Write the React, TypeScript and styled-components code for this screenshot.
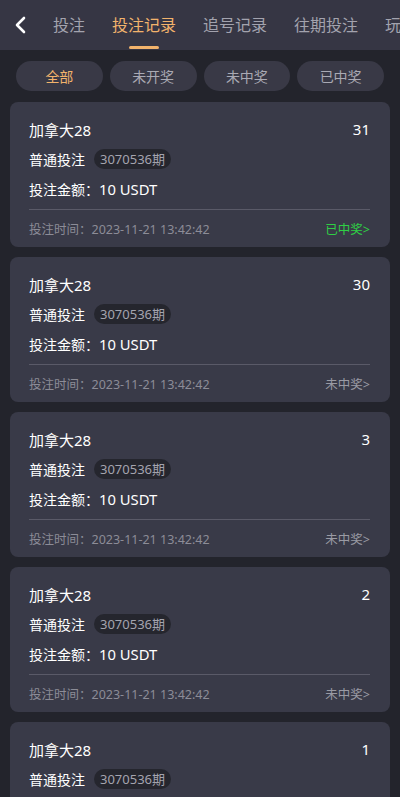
import React from "react";
import styled, { createGlobalStyle } from "styled-components";

const Global = createGlobalStyle`
  html, body { margin: 0; padding: 0; background: #23242c; }
  body { font-family: "Noto Sans", "Noto Sans CJK SC", sans-serif; }
  * { box-sizing: border-box; }
`;

const Page = styled.div`
  width: 400px;
  min-height: 797px;
  background: #23242c;
  overflow: hidden;
`;

const Header = styled.div`
  height: 50px;
  background: #363644;
  display: flex;
  align-items: center;
  overflow: hidden;
  white-space: nowrap;
`;

const Back = styled.div`
  width: 53px;
  flex: none;
  display: flex;
  align-items: center;
  padding-left: 14px;
  height: 50px;
`;

const Tabs = styled.div`
  display: flex;
  gap: 27px;
  height: 50px;
`;

const Tab = styled.div<{ $active?: boolean }>`
  position: relative;
  font-size: 16px;
  line-height: 50px;
  color: ${(p) => (p.$active ? "#f2b36c" : "#a3a3ae")};
  flex: none;
  &::after {
    content: "";
    display: ${(p) => (p.$active ? "block" : "none")};
    position: absolute;
    left: 50%;
    bottom: 1px;
    transform: translateX(-50%);
    width: 30px;
    height: 3px;
    border-radius: 2px;
    background: #f2b36c;
  }
`;

const Filters = styled.div`
  display: grid;
  grid-template-columns: repeat(4, 1fr);
  gap: 7px;
  padding: 11px 16px 11px;
`;

const Pill = styled.div<{ $active?: boolean }>`
  height: 30px;
  border-radius: 15px;
  background: #393946;
  color: ${(p) => (p.$active ? "#f2b36c" : "#a9a9b3")};
  font-size: 14px;
  display: flex;
  align-items: center;
  justify-content: center;
`;

const List = styled.div`
  display: flex;
  flex-direction: column;
  gap: 10px;
  padding: 0 10px 10px;
`;

const Card = styled.div`
  background: #393a48;
  border-radius: 8px;
  padding: 16px 20px 0 19px;
`;

const TitleRow = styled.div`
  display: flex;
  justify-content: space-between;
  align-items: center;
  height: 22px;
  font-size: 15px;
  color: #ffffff;
`;

const Row = styled.div`
  display: flex;
  align-items: center;
  height: 22px;
  margin-top: 8px;
  font-size: 14px;
  color: #ffffff;
`;

const Amount = styled.span`
  font-size: 14.8px;
`;

const Tag = styled.span`
  margin-left: 9px;
  height: 20px;
  line-height: 20px;
  padding: 0 6px;
  border-radius: 10px;
  background: #25262e;
  color: #a4a4ae;
  font-size: 13px;
`;

const Divider = styled.div`
  margin-top: 9px;
  height: 1px;
  background: #5a5a68;
`;

const Footer = styled.div`
  display: flex;
  justify-content: space-between;
  align-items: center;
  height: 37px;
  font-size: 12.5px;
  color: #8c8c97;
`;

const Status = styled.span<{ $won?: boolean }>`
  color: ${(p) => (p.$won ? "#2fcf45" : "#9a9aa4")};
`;

const tabs = ["投注", "投注记录", "追号记录", "往期投注", "玩法说明"];
const filters = ["全部", "未开奖", "未中奖", "已中奖"];
const records = [
  { n: 31, won: true },
  { n: 30, won: false },
  { n: 3, won: false },
  { n: 2, won: false },
  { n: 1, won: false },
];

export default function App() {
  return (
    <Page>
      <Global />
      <Header>
        <Back>
          <svg width="14" height="18" viewBox="0 0 14 18">
            <polyline
              points="10,2 3,9 10,16"
              fill="none"
              stroke="#ffffff"
              strokeWidth="2.6"
              strokeLinecap="round"
              strokeLinejoin="round"
            />
          </svg>
        </Back>
        <Tabs>
          {tabs.map((t, i) => (
            <Tab key={t} $active={i === 1}>
              {t}
            </Tab>
          ))}
        </Tabs>
      </Header>
      <Filters>
        {filters.map((f, i) => (
          <Pill key={f} $active={i === 0}>
            {f}
          </Pill>
        ))}
      </Filters>
      <List>
        {records.map((r) => (
          <Card key={r.n}>
            <TitleRow>
              <span>加拿大28</span>
              <span>{r.n}</span>
            </TitleRow>
            <Row>
              普通投注<Tag>3070536期</Tag>
            </Row>
            <Row>
              投注金额：<Amount>10 USDT</Amount>
            </Row>
            <Divider />
            <Footer>
              <span>投注时间：2023-11-21 13:42:42</span>
              <Status $won={r.won}>{r.won ? "已中奖>" : "未中奖>"}</Status>
            </Footer>
          </Card>
        ))}
      </List>
    </Page>
  );
}
